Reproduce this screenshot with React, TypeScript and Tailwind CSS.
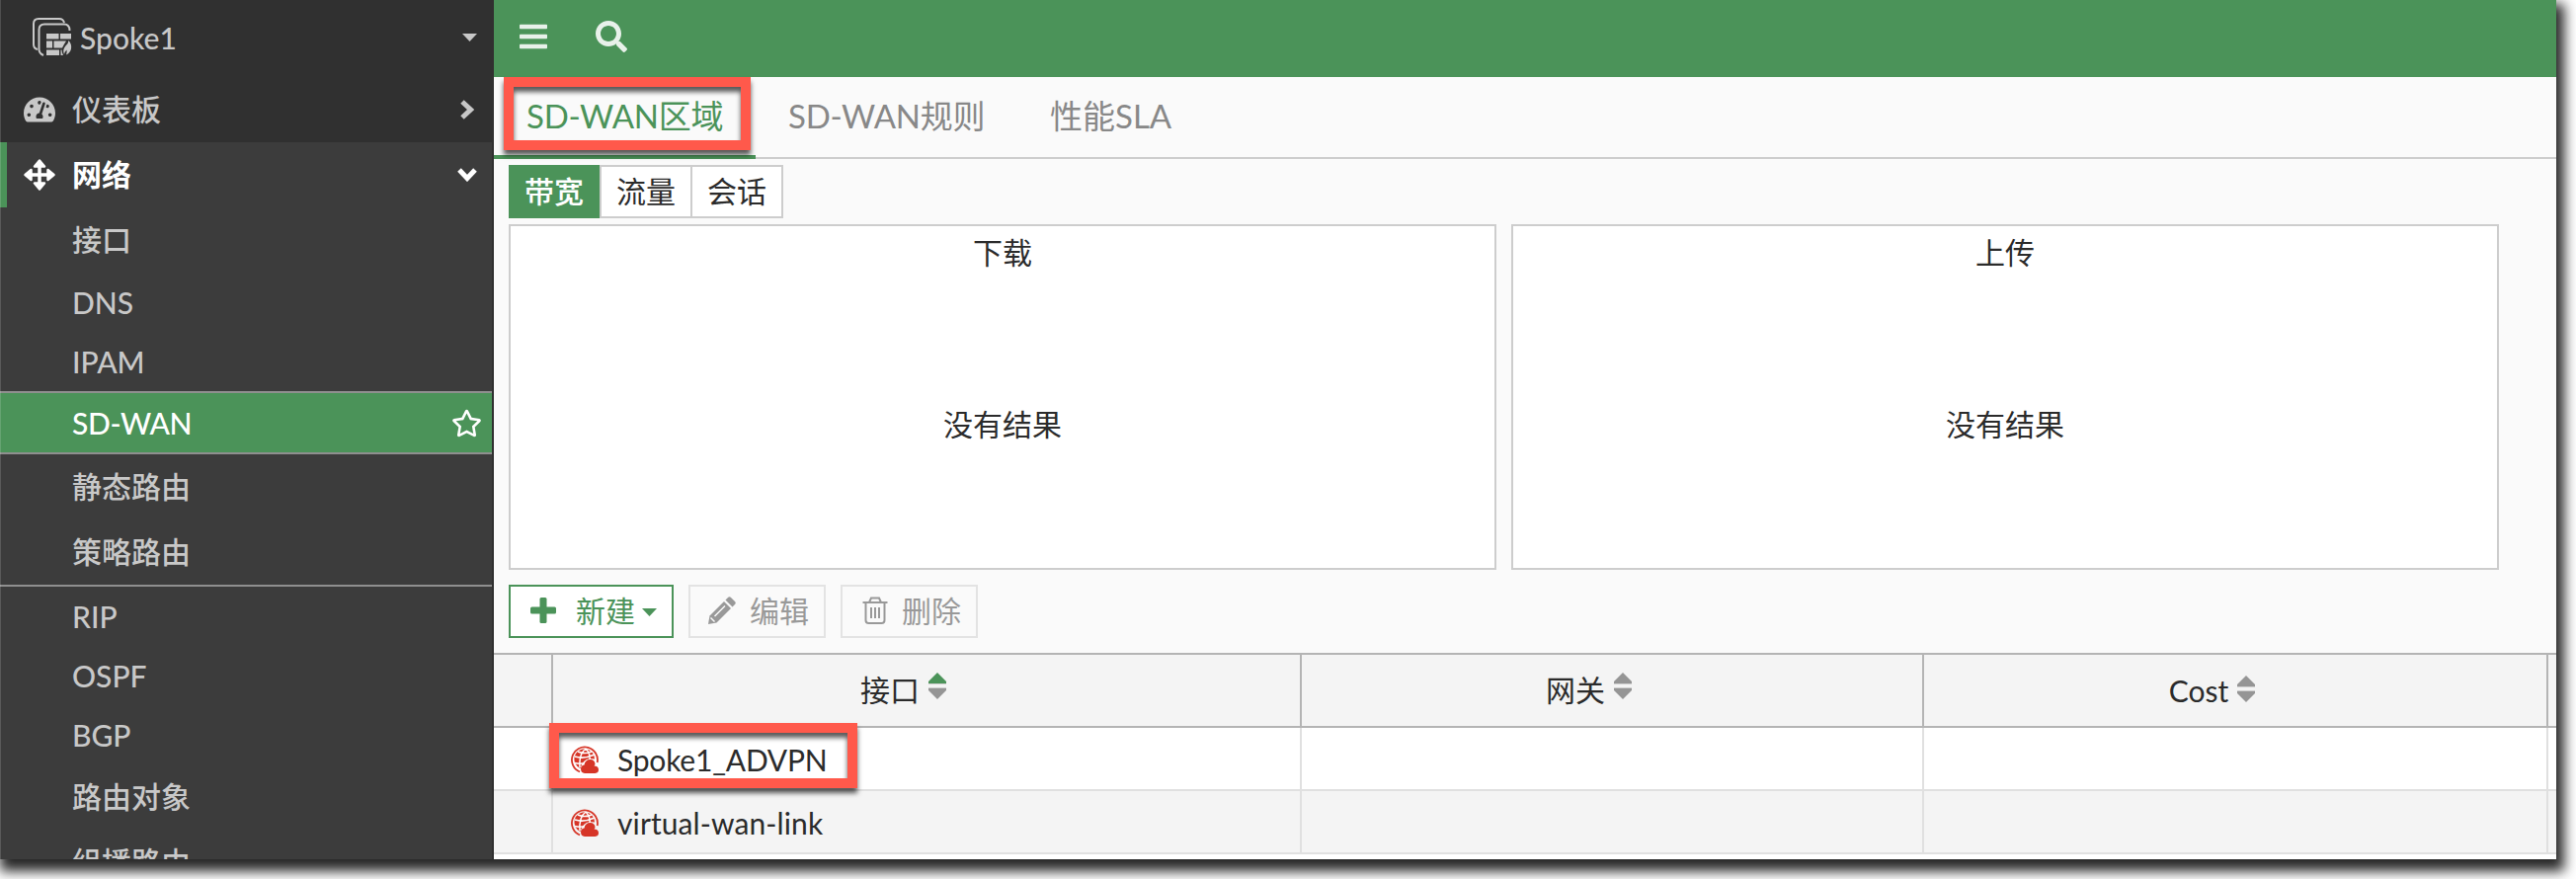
import { FaTachometerAlt, FaBars, FaSearch, FaRegStar } from "react-icons/fa";
import clsx from "clsx";

type TMenuItem = { label: string; latin?: boolean; active?: boolean; divider?: boolean };

const MENU: TMenuItem[] = [
  { label: "接口" },
  { label: "DNS", latin: true },
  { label: "IPAM", latin: true },
  { label: "SD-WAN", latin: true, active: true },
  { label: "静态路由" },
  { label: "策略路由", divider: true },
  { label: "RIP", latin: true },
  { label: "OSPF", latin: true },
  { label: "BGP", latin: true },
  { label: "路由对象" },
  { label: "组播路由" },
];

const COLUMNS = [
  { label: "接口", sorted: true },
  { label: "网关", sorted: false },
  { label: "Cost", sorted: false },
];

const ROWS = ["Spoke1_ADVPN", "virtual-wan-link"];

const GRID = "grid grid-cols-[60px_758px_630px_632px_8px]";

function FirewallIcon() {
  return (
    <svg width="40" height="40" viewBox="0 0 40 40" fill="none" className="shrink-0">
      <path d="M5 32 Q1 31 1 27 V6 Q1 1 6 1 H27 Q31 1 32 5" stroke="#c8c8c8" strokeWidth="2" />
      <path d="M11 38 Q6.500 36 6.500 32 V12 Q6.500 6.500 12 6.500 H32 Q37.500 6.500 37.500 13" stroke="#c8c8c8" strokeWidth="2" />
      <path
        d="M14 16h12.500v5.500H14z M28 16h11v5.500H28z M14 23.500h6v7h-6z M21.500 23.500h12.500q-2 3-4 7h-8.500z M14 32.500h13v5.500H14z M28.500 32.500h1q0 3 1.500 5.500h-2.500z M36.500 23q3.500 4 2.500 8.500-1 4-5 6 1-3 .5-5-2 2-2.500 4.500-2-4 1-8 3.500-3 3.500-6z"
        fill="#c8c8c8"
      />
    </svg>
  );
}

function MoveIcon() {
  return (
    <svg width="32" height="32" viewBox="0 0 32 32" fill="#fff" stroke="#fff" strokeLinejoin="round" className="shrink-0">
      <path d="M16 4v24M4 16h24" strokeWidth="3.500" />
      <path
        d="M16 1.500 21 7.500H11z M16 30.500 11 24.500H21z M1.500 16 7.500 11V21z M30.500 16 24.500 21V11z"
        strokeWidth="2.500"
      />
    </svg>
  );
}

function Caret({ className }: { className?: string }) {
  return (
    <svg width="15" height="8" viewBox="0 0 15 8" fill="currentColor" className={className}>
      <path d="M0 0h15L7.500 8z" />
    </svg>
  );
}

function SortIcon({ sorted }: { sorted: boolean }) {
  return (
    <svg width="18" height="28" viewBox="0 0 18 28" className="shrink-0">
      <path d="M9 0 18 9v3H0V9z" fill={sorted ? "#4b9359" : "#959595"} />
      <path d="M0 15h18v3l-9 9-9-9z" fill="#959595" />
      <path d="M0 11.500h18M0 15.500h18" stroke="#cfcfcf" />
    </svg>
  );
}

function PencilIcon() {
  return (
    <svg width="28" height="28" viewBox="0 0 28 28" fill="#999" className="shrink-0">
      <path d="M0 28 1.500 19.500 16 5l7 7L8.500 26.500z" />
      <path d="M17.500 3.500 20 1q1.500-1.500 3 0l4 4q1.500 1.500 0 3l-2.500 2.500z" />
      <path d="M2.500 21.500 6.500 25.500M6.500 20 17 9.500" stroke="#fafafa" strokeWidth="1.500" />
    </svg>
  );
}

function TrashIcon() {
  return (
    <svg width="26" height="28" viewBox="0 0 26 28" fill="none" stroke="#999" strokeWidth="2" className="shrink-0">
      <path d="M0.500 6H25.500M7 6 9 1.500h8L19 6M3.500 6V24q0 3 3 3h13q3 0 3-3V6M9 11v11M13 11v11M17 11v11" />
    </svg>
  );
}

function ZoneIcon() {
  return (
    <svg width="28" height="28" viewBox="0 0 28 28" fill="none" className="shrink-0">
      <path d="M9 26.500A13 13 0 1 1 26.700 17" stroke="#d63527" strokeWidth="1.800" />
      <path d="M9.500 23A10.300 10.300 0 1 1 24 13.500L19 13Q12 14 9.500 23z" fill="#d63527" />
      <path
        d="M4 11Q13 14 24 9M4 17.500Q9 19 14 17.500M7 6Q14 9 21 6M15 3Q8 8 9 22M15 3Q20 8 19 15"
        stroke="#fff"
        strokeWidth="1.500"
      />
      <path
        d="M14 28q-4-.5-4-4.500 0-3.500 3.500-4 1-5.500 6-5.500 4.500 0 5 4.500-.3 1.500-1 2 4.500 0 4.500 4 0 3-3.500 3.500z"
        fill="#d63527"
      />
    </svg>
  );
}

function Sidebar() {
  return (
    <aside className="relative w-[500px] h-full shrink-0 overflow-hidden bg-[#303030] text-[#c8c8c8] font-medium">
      <div className="h-[78px] flex items-center pl-[33px] pr-[17px] pb-[2px]">
        <FirewallIcon />
        <span className="ml-[8px] flex-1">Spoke1</span>
        <Caret />
      </div>
      <div className="h-[66px] flex items-center pl-[24px] pr-[20px]">
        <FaTachometerAlt size={32} />
        <span className="ml-[17px] flex-1 pb-[2px]">仪表板</span>
        <svg width="14" height="20" viewBox="0 0 14 20" fill="none" stroke="currentColor" strokeWidth="5">
          <path d="M2 2 10.500 10 2 18" />
        </svg>
      </div>
      <div className="mr-[2px] bg-[#3c3c3c]">
        <div className="relative h-[66px] flex items-center pl-[24px] pr-[15px] text-white font-bold">
          <span className="absolute left-0 top-0 h-full w-[7px] bg-[#4b9359]" />
          <MoveIcon />
          <span className="ml-[17px] flex-1 pb-[2px]">网络</span>
          <svg width="20" height="14" viewBox="0 0 20 14" fill="none" stroke="currentColor" strokeWidth="5">
            <path d="M2 2 10 10.500 18 2" />
          </svg>
        </div>
        {MENU.map((item) => (
          <div
            key={item.label}
            className={clsx(
              "flex items-center justify-between pl-[73px] pr-[10px]",
              item.active && "h-[64px] border-y-2 border-[#8f8f8f] bg-[#4b9359] text-white",
              !item.active && item.latin && "h-[60px]",
              !item.latin && !item.divider && "h-[66px] pb-[2px]",
              item.divider && "h-[68px] pb-[2px] border-b-2 border-[#8f8f8f]"
            )}
          >
            <span className={clsx(item.active && "tracking-[-0.3px]")}>{item.label}</span>
            {item.active && <FaRegStar size={31} />}
          </div>
        ))}
      </div>
      <span className="absolute left-0 top-0 w-px h-full bg-white/15" />
    </aside>
  );
}

function Tabs() {
  return (
    <div className="h-[83px] flex border-b-2 border-[#cdcdcd] text-[33px] text-[#888]">
      <div className="relative w-[265px] h-[83px] pl-[33px] flex items-center border-b-4 border-[#4b9359] text-[#4b9359] tracking-[-0.2px]">
        SD-WAN区域
        <span className="absolute left-[10px] top-0 w-[250px] h-[74px] border-10 border-[#ff594b] shadow-[0_5px_5px_rgba(0,0,0,0.65),inset_0_5px_5px_rgba(0,0,0,0.65)]" />
      </div>
      <div className="w-[267px] h-[79px] pl-[33px] flex items-center tracking-[-0.2px]">SD-WAN规则</div>
      <div className="h-[79px] pl-[31px] flex items-center">性能SLA</div>
    </div>
  );
}

function ChartPanel({ title }: { title: string }) {
  return (
    <div className="w-[1000px] h-[350px] border-2 border-[#cdcdcd] bg-white flex flex-col items-center">
      <div className="h-[52px] flex items-center">{title}</div>
      <div className="mt-[93px] h-[110px] flex items-center">没有结果</div>
    </div>
  );
}

function Toolbar() {
  return (
    <div className="mt-[15px] ml-[15px] flex gap-[15px] h-[54px]">
      <button className="w-[167px] flex items-center pl-[20px] pb-[2px] border-2 border-[#4b9359] bg-white text-[#4b9359]">
        <svg width="26" height="26" viewBox="0 0 26 26" fill="currentColor">
          <rect x="9.500" width="7" height="26" rx="1.500" />
          <rect y="9.500" width="26" height="7" rx="1.500" />
        </svg>
        <span className="ml-[20px]">新建</span>
        <Caret className="ml-[7px] mt-[3px]" />
      </button>
      <button className="w-[139px] flex items-center pl-[18px] pb-[2px] border-2 border-[#e3e3e3] text-[#999]">
        <PencilIcon />
        <span className="ml-[14px]">编辑</span>
      </button>
      <button className="w-[139px] flex items-center pl-[20px] pb-[2px] border-2 border-[#e3e3e3] text-[#999]">
        <TrashIcon />
        <span className="ml-[14px]">删除</span>
      </button>
    </div>
  );
}

function ZoneTable() {
  return (
    <div className="mt-[15px] flex-1 bg-white">
      <div className={clsx(GRID, "h-[76px] border-y-2 border-[#b4b4b4] bg-[#f4f4f4]")}>
        <div className="border-r-2 border-[#b4b4b4]" />
        {COLUMNS.map((col) => (
          <div
            key={col.label}
            className="flex items-center justify-center gap-[9px] pr-[47px] border-r-2 border-[#b4b4b4]"
          >
            <span className={clsx(col.label !== "Cost" && "pb-[2px]")}>{col.label}</span>
            <span className={clsx(col.label === "Cost" ? "pb-[3px]" : "pb-[8px]")}>
              <SortIcon sorted={col.sorted} />
            </span>
          </div>
        ))}
      </div>
      {ROWS.map((name, i) => (
        <div key={name} className={clsx(GRID, "h-[64px] border-b-2 border-[#e0e0e0]", i % 2 === 1 && "bg-[#f4f4f4]")}>
          <div className="border-r-2 border-[#e0e0e0]" />
          <div className="relative flex items-center pl-[18px] pt-[2px] border-r-2 border-[#e0e0e0]">
            <ZoneIcon />
            <span className={clsx("ml-[19px]", i === 0 ? "tracking-[-0.2px]" : "tracking-[0.1px]")}>{name}</span>
            {i === 0 && (
              <span className="absolute z-10 left-[-4px] top-[-5px] w-[312px] h-[66px] border-10 border-[#ff594b] shadow-[0_5px_5px_rgba(0,0,0,0.65),inset_0_5px_5px_rgba(0,0,0,0.65)]" />
            )}
          </div>
          <div className="border-r-2 border-[#e0e0e0]" />
          <div className="border-r-2 border-[#e0e0e0]" />
        </div>
      ))}
    </div>
  );
}

export default function App() {
  return (
    <div className="w-[2608px] h-[890px] overflow-hidden bg-white font-['Lato','Noto_Sans_CJK_SC',sans-serif] text-[30px] leading-none text-[#2b2b2b] whitespace-nowrap">
      <div className="w-[2588px] h-[870px] flex shadow-[4px_8px_12px_4px_rgba(0,0,0,0.85)]">
        <Sidebar />
        <main className="flex-1 min-w-0 h-full overflow-hidden flex flex-col bg-[#fafafa]">
          <header className="h-[78px] shrink-0 flex items-center gap-[47px] pl-[24px] pb-[4px] bg-[#4b9359] text-[#e8f1ea]">
            <FaBars size={32} />
            <FaSearch size={32} />
          </header>
          <Tabs />
          <div className="mt-[6px] ml-[15px] flex h-[54px]">
            <div className="w-[92px] flex items-center justify-center pb-[2px] bg-[#4b9359] text-white font-medium">带宽</div>
            <div className="w-[94px] flex items-center justify-center pb-[2px] border-2 border-[#cdcdcd] bg-white">流量</div>
            <div className="w-[92px] flex items-center justify-center pb-[2px] border-2 border-l-0 border-[#cdcdcd] bg-white">会话</div>
          </div>
          <div className="mt-[6px] ml-[15px] flex gap-[15px]">
            <ChartPanel title="下载" />
            <ChartPanel title="上传" />
          </div>
          <Toolbar />
          <ZoneTable />
        </main>
      </div>
    </div>
  );
}
